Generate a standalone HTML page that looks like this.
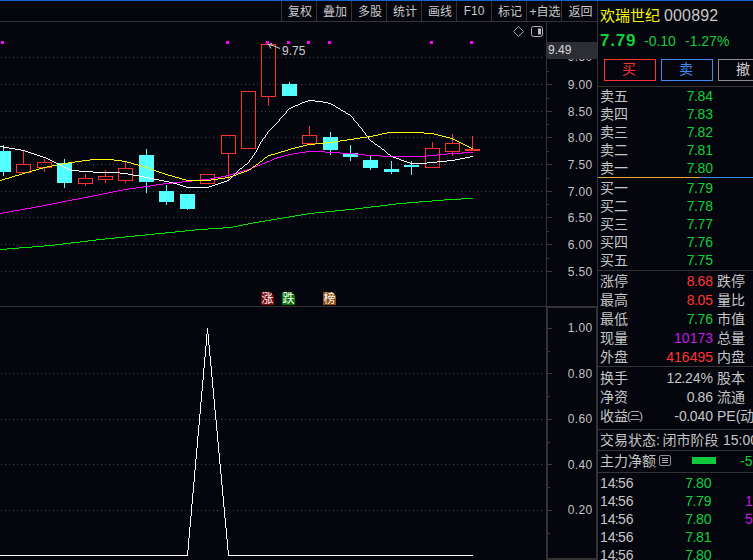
<!DOCTYPE html>
<html lang="zh-CN"><head><meta charset="utf-8"><title>欢瑞世纪 000892</title>
<style>
html,body{margin:0;padding:0;background:#04050d;}
body{width:753px;height:560px;overflow:hidden;position:relative;font-family:"Liberation Sans","Noto Sans CJK SC",sans-serif;color:#c6c6c6;}
#app{position:absolute;left:0;top:0;width:753px;height:560px;overflow:hidden;background:#04050d;}
.abs{position:absolute;white-space:nowrap;}
.ln{position:absolute;background:#333334;}
.tb{position:absolute;top:1px;height:20px;line-height:20px;font-size:12px;text-align:center;color:#cacaca;white-space:nowrap;}
.ax{position:absolute;left:548px;width:44.6px;letter-spacing:.35px;text-align:right;font-size:12px;line-height:12px;height:12px;color:#c4c4c4;white-space:nowrap;}
.r{position:absolute;left:598px;width:155px;height:18px;font-size:14px;line-height:18px;white-space:nowrap;}
.r .l{position:absolute;left:2px;top:0;}
.r .v{position:absolute;right:41px;top:0;text-align:right;}
.r .l2{position:absolute;left:119px;top:0;}
.d{font-style:normal;margin:0 -.5px;}
.g{color:#10d038;} .rd{color:#ff3535;} .p{color:#c21be6;}
.btn{position:absolute;top:59px;width:50px;height:20px;border:1px solid;line-height:20px;text-align:center;font-size:14px;}
.bdg{position:absolute;top:292px;width:13px;height:13px;font-size:12px;line-height:15px;text-align:center;color:#fff;overflow:hidden;}
.bdg i{position:absolute;right:-2.5px;top:-2.5px;width:5px;height:5px;background:#04050d;transform:rotate(45deg);}
</style></head><body><div id="app">

<div class="abs" style="left:0;top:0;width:753px;height:1px;background:#1464d2"></div>
<div class="ln" style="left:0;top:21px;width:597px;height:1px"></div>
<div class="ln" style="left:281px;top:1px;width:1px;height:20px"></div>
<div class="tb" style="left:283px;top:2px;width:34px">复权</div>
<div class="ln" style="left:316px;top:1px;width:1px;height:20px"></div>
<div class="tb" style="left:318px;top:2px;width:34px">叠加</div>
<div class="ln" style="left:351px;top:1px;width:1px;height:20px"></div>
<div class="tb" style="left:353px;top:2px;width:34px">多股</div>
<div class="ln" style="left:386px;top:1px;width:1px;height:20px"></div>
<div class="tb" style="left:388px;top:2px;width:34px">统计</div>
<div class="ln" style="left:421px;top:1px;width:1px;height:20px"></div>
<div class="tb" style="left:423px;top:2px;width:34px">画线</div>
<div class="ln" style="left:456px;top:1px;width:1px;height:20px"></div>
<div class="tb" style="left:457px;width:34px">F10</div>
<div class="ln" style="left:491px;top:1px;width:1px;height:20px"></div>
<div class="tb" style="left:493px;top:2px;width:34px">标记</div>
<div class="ln" style="left:526px;top:1px;width:1px;height:20px"></div>
<div class="tb" style="left:528px;top:2px;width:34px">+自选</div>
<div class="ln" style="left:561px;top:1px;width:1px;height:20px"></div>
<div class="tb" style="left:563px;top:2px;width:35px">返回</div>
<div class="ln" style="left:597px;top:1px;width:1px;height:559px"></div>
<div class="ln" style="left:546px;top:22px;width:1px;height:285px"></div>
<div class="ln" style="left:0;top:306px;width:597px;height:1px"></div>
<div class="ln" style="left:546px;top:306px;width:2px;height:254px"></div>
<div class="ln" style="left:546px;top:306px;width:52px;height:2px"></div>
<div class="ln" style="left:596px;top:306px;width:2px;height:254px"></div>
<div class="ln" style="left:546px;top:558px;width:52px;height:2px"></div>
<svg class="abs" style="left:0;top:0" width="598" height="560" viewBox="0 0 598 560" shape-rendering="crispEdges">
<line x1="1" x2="543" y1="57.5" y2="57.5" stroke="#404046" stroke-width="1" stroke-dasharray="1 3"/>
<line x1="1" x2="543" y1="84.5" y2="84.5" stroke="#404046" stroke-width="1" stroke-dasharray="1 3"/>
<line x1="1" x2="543" y1="111.5" y2="111.5" stroke="#404046" stroke-width="1" stroke-dasharray="1 3"/>
<line x1="1" x2="543" y1="137.5" y2="137.5" stroke="#404046" stroke-width="1" stroke-dasharray="1 3"/>
<line x1="1" x2="543" y1="164.5" y2="164.5" stroke="#404046" stroke-width="1" stroke-dasharray="1 3"/>
<line x1="1" x2="543" y1="191.5" y2="191.5" stroke="#404046" stroke-width="1" stroke-dasharray="1 3"/>
<line x1="1" x2="543" y1="217.5" y2="217.5" stroke="#404046" stroke-width="1" stroke-dasharray="1 3"/>
<line x1="1" x2="543" y1="244.5" y2="244.5" stroke="#404046" stroke-width="1" stroke-dasharray="1 3"/>
<line x1="1" x2="543" y1="271.5" y2="271.5" stroke="#404046" stroke-width="1" stroke-dasharray="1 3"/>
<line x1="1" x2="543" y1="373.5" y2="373.5" stroke="#404046" stroke-width="1" stroke-dasharray="1 3"/>
<line x1="1" x2="543" y1="419.5" y2="419.5" stroke="#404046" stroke-width="1" stroke-dasharray="1 3"/>
<line x1="1" x2="543" y1="464.5" y2="464.5" stroke="#404046" stroke-width="1" stroke-dasharray="1 3"/>
<line x1="1" x2="543" y1="510.5" y2="510.5" stroke="#404046" stroke-width="1" stroke-dasharray="1 3"/>
<rect x="547" y="57" width="5" height="1" fill="#3a3a3c"/>
<rect x="547" y="71" width="2" height="1" fill="#3a3a3c"/>
<rect x="547" y="84" width="5" height="1" fill="#3a3a3c"/>
<rect x="547" y="98" width="2" height="1" fill="#3a3a3c"/>
<rect x="547" y="111" width="5" height="1" fill="#3a3a3c"/>
<rect x="547" y="124" width="2" height="1" fill="#3a3a3c"/>
<rect x="547" y="137" width="5" height="1" fill="#3a3a3c"/>
<rect x="547" y="151" width="2" height="1" fill="#3a3a3c"/>
<rect x="547" y="164" width="5" height="1" fill="#3a3a3c"/>
<rect x="547" y="178" width="2" height="1" fill="#3a3a3c"/>
<rect x="547" y="191" width="5" height="1" fill="#3a3a3c"/>
<rect x="547" y="204" width="2" height="1" fill="#3a3a3c"/>
<rect x="547" y="217" width="5" height="1" fill="#3a3a3c"/>
<rect x="547" y="231" width="2" height="1" fill="#3a3a3c"/>
<rect x="547" y="244" width="5" height="1" fill="#3a3a3c"/>
<rect x="547" y="258" width="2" height="1" fill="#3a3a3c"/>
<rect x="547" y="271" width="5" height="1" fill="#3a3a3c"/>
<rect x="548" y="328" width="4" height="1" fill="#3a3a3c"/>
<rect x="548" y="351" width="2" height="1" fill="#3a3a3c"/>
<rect x="548" y="373" width="4" height="1" fill="#3a3a3c"/>
<rect x="548" y="396" width="2" height="1" fill="#3a3a3c"/>
<rect x="548" y="419" width="4" height="1" fill="#3a3a3c"/>
<rect x="548" y="442" width="2" height="1" fill="#3a3a3c"/>
<rect x="548" y="464" width="4" height="1" fill="#3a3a3c"/>
<rect x="548" y="487" width="2" height="1" fill="#3a3a3c"/>
<rect x="548" y="510" width="4" height="1" fill="#3a3a3c"/>
<rect x="548" y="533" width="2" height="1" fill="#3a3a3c"/>
<rect x="1" y="41" width="3" height="3" fill="#ff00ff"/>
<rect x="226" y="41" width="3" height="3" fill="#ff00ff"/>
<rect x="266" y="41" width="3" height="3" fill="#ff00ff"/>
<rect x="287" y="41" width="3" height="3" fill="#ff00ff"/>
<rect x="307" y="41" width="3" height="3" fill="#ff00ff"/>
<rect x="328" y="41" width="3" height="3" fill="#ff00ff"/>
<rect x="430" y="41" width="3" height="3" fill="#ff00ff"/>
<rect x="470" y="41" width="3" height="3" fill="#ff00ff"/>
<rect x="3" y="145" width="1" height="31" fill="#54ffff"/>
<rect x="-4" y="151" width="15" height="21" fill="#54ffff"/>
<rect x="23" y="151" width="1" height="13" fill="#ff3232"/>
<rect x="16.5" y="164.5" width="14" height="8" fill="none" stroke="#ff3232" stroke-width="1"/>
<rect x="44" y="159" width="1" height="3" fill="#ff3232"/>
<rect x="44" y="168" width="1" height="4" fill="#ff3232"/>
<rect x="37.5" y="162.5" width="14" height="5" fill="none" stroke="#ff3232" stroke-width="1"/>
<rect x="64" y="159" width="1" height="29" fill="#54ffff"/>
<rect x="57" y="163" width="15" height="20" fill="#54ffff"/>
<rect x="85" y="174" width="1" height="4" fill="#ff3232"/>
<rect x="85" y="184" width="1" height="2" fill="#ff3232"/>
<rect x="78.5" y="178.5" width="14" height="5" fill="none" stroke="#ff3232" stroke-width="1"/>
<rect x="105" y="170" width="1" height="6" fill="#ff3232"/>
<rect x="105" y="180" width="1" height="3" fill="#ff3232"/>
<rect x="98.5" y="176.5" width="14" height="3" fill="none" stroke="#ff3232" stroke-width="1"/>
<rect x="125" y="162" width="1" height="6" fill="#ff3232"/>
<rect x="125" y="181" width="1" height="2" fill="#ff3232"/>
<rect x="118.5" y="168.5" width="14" height="12" fill="none" stroke="#ff3232" stroke-width="1"/>
<rect x="146" y="149" width="1" height="44" fill="#54ffff"/>
<rect x="139" y="155" width="15" height="27" fill="#54ffff"/>
<rect x="166" y="185" width="1" height="20" fill="#54ffff"/>
<rect x="159" y="191" width="15" height="11" fill="#54ffff"/>
<rect x="187" y="194" width="1" height="16" fill="#54ffff"/>
<rect x="180" y="194" width="15" height="15" fill="#54ffff"/>
<rect x="200.5" y="174.5" width="14" height="9" fill="none" stroke="#ff3232" stroke-width="1"/>
<rect x="228" y="154" width="1" height="26" fill="#ff3232"/>
<rect x="221.5" y="135.5" width="14" height="18" fill="none" stroke="#ff3232" stroke-width="1"/>
<rect x="241.5" y="91.5" width="14" height="57" fill="none" stroke="#ff3232" stroke-width="1"/>
<rect x="268" y="97" width="1" height="9" fill="#ff3232"/>
<rect x="261.5" y="44.5" width="14" height="52" fill="none" stroke="#ff3232" stroke-width="1"/>
<rect x="289" y="82" width="1" height="14" fill="#54ffff"/>
<rect x="282" y="84" width="15" height="12" fill="#54ffff"/>
<rect x="309" y="126" width="1" height="9" fill="#ff3232"/>
<rect x="302.5" y="135.5" width="14" height="8" fill="none" stroke="#ff3232" stroke-width="1"/>
<rect x="330" y="132" width="1" height="23" fill="#54ffff"/>
<rect x="323" y="137" width="15" height="13" fill="#54ffff"/>
<rect x="350" y="145" width="1" height="16" fill="#54ffff"/>
<rect x="343" y="153" width="15" height="4" fill="#54ffff"/>
<rect x="370" y="156" width="1" height="14" fill="#54ffff"/>
<rect x="363" y="160" width="15" height="8" fill="#54ffff"/>
<rect x="391" y="161" width="1" height="13" fill="#54ffff"/>
<rect x="384" y="169" width="15" height="3" fill="#54ffff"/>
<rect x="411" y="161" width="1" height="14" fill="#54ffff"/>
<rect x="404" y="165" width="15" height="2" fill="#54ffff"/>
<rect x="432" y="142" width="1" height="6" fill="#ff3232"/>
<rect x="425.5" y="148.5" width="14" height="19" fill="none" stroke="#ff3232" stroke-width="1"/>
<rect x="452" y="134" width="1" height="9" fill="#ff3232"/>
<rect x="452" y="152" width="1" height="4" fill="#ff3232"/>
<rect x="445.5" y="143.5" width="14" height="8" fill="none" stroke="#ff3232" stroke-width="1"/>
<rect x="472" y="136" width="1" height="15" fill="#ff3232"/>
<rect x="465" y="149" width="15" height="2" fill="#ff3232"/>
<clipPath id="cl"><rect x="0" y="22" width="473" height="538"/></clipPath><g clip-path="url(#cl)">
<path fill="none" stroke="#00e600" stroke-width="1" d="M0 249.5h7M7 248.5h12M19 247.5h13M32 246.5h12M44 245.5h11M55 244.5h8M63 243.5h8M71 242.5h9M80 241.5h8M88 240.5h8M96 239.5h9M105 238.5h10M115 237.5h10M125 236.5h10M135 235.5h10M145 234.5h10M155 233.5h10M165 232.5h10M175 231.5h10M185 230.5h10M195 229.5h13M208 228.5h15M223 227.5h10M233 226.5h5M238 225.5h5M243 224.5h5M248 223.5h5M253 222.5h6M259 221.5h6M265 220.5h6M271 219.5h6M277 218.5h6M283 217.5h6M289 216.5h6M295 215.5h6M301 214.5h6M307 213.5h8M315 212.5h10M325 211.5h10M335 210.5h10M345 209.5h10M355 208.5h8M363 207.5h8M371 206.5h9M380 205.5h8M388 204.5h8M396 203.5h11M407 202.5h12M419 201.5h13M432 200.5h12M444 199.5h17M461 198.5h12"/>
<path fill="none" stroke="#ff00ff" stroke-width="1" d="M0 213.5h3M3 212.5h6M9 211.5h5M14 210.5h6M20 209.5h5M25 208.5h6M31 207.5h5M36 206.5h6M42 205.5h5M47 204.5h5M52 203.5h5M57 202.5h5M62 201.5h5M67 200.5h5M72 199.5h6M78 198.5h5M83 197.5h5M88 196.5h5M93 195.5h5M98 194.5h5M103 193.5h5M108 192.5h5M113 191.5h5M118 190.5h5M123 189.5h6M129 188.5h7M136 187.5h7M143 186.5h7M150 185.5h6M156 184.5h7M163 183.5h9M172 182.5h10M182 181.5h10M192 180.5h10M202 179.5h8M210 178.5h5M215 177.5h6M221 176.5h5M226 175.5h4M230 174.5h3M233 173.5h4M237 172.5h3M240 171.5h3M243 170.5h4M247 169.5h3M250 168.5h2M252 167.5h3M255 166.5h2M257 165.5h3M260 164.5h2M262 163.5h3M265 162.5h2M267 161.5h3M270 160.5h2M272 159.5h2M274 158.5h3M277 157.5h4M281 156.5h3M284 155.5h4M288 154.5h5M293 153.5h6M299 152.5h7M306 151.5h19M325 152.5h15M340 153.5h15M355 154.5h10M365 155.5h16M381 156.5h46M427 155.5h10M437 154.5h10M447 153.5h15M462 152.5h11"/>
<path fill="none" stroke="#ffff00" stroke-width="1" d="M0 180.5h2M2 179.5h3M5 178.5h4M9 177.5h3M12 176.5h3M15 175.5h4M19 174.5h3M22 173.5h3M25 172.5h4M29 171.5h3M32 170.5h4M36 169.5h3M39 168.5h4M43 167.5h4M47 166.5h5M52 165.5h5M57 164.5h5M62 163.5h6M68 162.5h7M75 161.5h7M82 160.5h8M90 159.5h24M114 160.5h8M122 161.5h5M127 162.5h4M131 163.5h3M134 164.5h4M138 165.5h3M141 166.5h4M145 167.5h3M148 168.5h3M151 169.5h3M154 170.5h2M156 171.5h3M159 172.5h3M162 173.5h3M165 174.5h3M168 175.5h4M172 176.5h3M175 177.5h4M179 178.5h3M182 179.5h4M186 180.5h25M211 179.5h7M218 178.5h7M225 177.5h5M230 176.5h3M233 175.5h3M236 174.5h2M238 173.5h3M241 172.5h3M244 171.5h3M247 170.5h2M249 169.5h2M251 168.5h1M252 167.5h1M253 166.5h2M255 165.5h1M256 164.5h2M258 163.5h1M259 162.5h1M260 161.5h2M262 160.5h1M263 159.5h1M264 158.5h1M265 157.5h2M267 156.5h1M268 155.5h3M271 154.5h4M275 153.5h3M278 152.5h3M281 151.5h4M285 150.5h3M288 149.5h3M291 148.5h4M295 147.5h4M299 146.5h4M303 145.5h4M307 144.5h8M315 143.5h10M325 142.5h9M334 141.5h6M340 140.5h7M347 139.5h7M354 138.5h6M360 137.5h7M367 136.5h6M373 135.5h5M378 134.5h4M382 133.5h5M387 132.5h37M424 133.5h10M434 134.5h4M438 135.5h4M442 136.5h4M446 137.5h4M450 138.5h3M453 139.5h2M455 140.5h2M457 141.5h2M459 142.5h2M461 143.5h2M463 144.5h2M465 145.5h2M467 146.5h2M469 147.5h2M471 148.5h2"/>
<path fill="none" stroke="#ffffff" stroke-width="1" d="M0 146.5h3M3 147.5h6M9 148.5h6M15 149.5h6M21 150.5h4M25 151.5h3M28 152.5h3M31 153.5h3M34 154.5h3M37 155.5h3M40 156.5h3M43 157.5h3M46 158.5h2M48 159.5h2M50 160.5h2M52 161.5h2M54 162.5h2M56 163.5h2M58 164.5h2M60 165.5h2M62 166.5h2M64 167.5h2M66 168.5h2M68 169.5h3M71 170.5h8M79 171.5h14M93 172.5h27M120 173.5h8M128 174.5h5M133 175.5h6M139 176.5h5M144 177.5h5M149 178.5h5M154 179.5h5M159 180.5h5M164 181.5h5M169 182.5h4M173 183.5h4M177 184.5h3M180 185.5h3M183 186.5h3M186 187.5h23M209 186.5h3M212 185.5h3M215 184.5h3M218 183.5h3M221 182.5h3M224 181.5h3M227 180.5h2M229 179.5h1M230 178.5h1M231 177.5h1M232 176.5h1M233 175.5h1M234 174.5h1M235 173.5h1M236 172.5h1M237 171.5h1M238 170.5h1M239 169.5h1M240 168.5h2M242 167.5h1M243 166.5h1M244 165.5h1M245 164.5h2M247 163.5h1M248 162.5h1M249.5 160v2M250 159.5h1M251 158.5h1M252.5 156v2M253 155.5h1M254.5 153v2M255 152.5h1M256.5 150v2M257.5 148v2M258.5 146v2M259.5 144v2M260.5 142v2M261 141.5h1M262.5 139v2M263 138.5h1M264 137.5h1M265.5 135v2M266 134.5h1M267.5 132v2M268 131.5h1M269 130.5h1M270 129.5h1M271 128.5h1M272 127.5h1M273 126.5h1M274 125.5h1M275 124.5h1M276 123.5h1M277 122.5h1M278 121.5h1M279.5 119v2M280 118.5h1M281 117.5h1M282 116.5h1M283 115.5h1M284 114.5h1M285 113.5h1M286.5 111v2M287 110.5h1M288 109.5h1M289 108.5h2M291 107.5h2M293 106.5h2M295 105.5h3M298 104.5h2M300 103.5h2M302 102.5h3M305 101.5h3M308 100.5h7M315 101.5h8M323 102.5h5M328 103.5h3M331 104.5h2M333 105.5h2M335 106.5h1M336 107.5h2M338 108.5h2M340 109.5h1M341 110.5h2M343 111.5h2M345 112.5h1M346 113.5h2M348 114.5h2M350 115.5h1M351 116.5h1M352 117.5h1M353.5 118v2M354 120.5h1M355 121.5h1M356 122.5h1M357 123.5h1M358.5 124v2M359 126.5h1M360 127.5h1M361 128.5h1M362.5 129v2M363 131.5h1M364 132.5h1M365.5 133v2M366 135.5h1M367 136.5h1M368.5 137v2M369 139.5h1M370 140.5h1M371 141.5h2M373 142.5h1M374 143.5h1M375 144.5h2M377 145.5h1M378 146.5h2M380 147.5h1M381 148.5h1M382 149.5h2M384 150.5h1M385 151.5h1M386 152.5h1M387 153.5h1M388 154.5h2M390 155.5h1M391 156.5h2M393 157.5h3M396 158.5h3M399 159.5h2M401 160.5h3M404 161.5h3M407 162.5h3M410 163.5h17M427 162.5h10M437 161.5h10M447 160.5h8M455 159.5h5M460 158.5h5M465 157.5h5M470 156.5h3"/>
<path fill="none" stroke="#ffffff" stroke-width="1" d="M0 555.5h188M187.5 550v5M188.5 538v12M189.5 527v11M190.5 516v11M191.5 504v12M192.5 493v11M193.5 482v11M194.5 470v12M195.5 459v11M196.5 448v11M197.5 436v12M198.5 425v11M199.5 414v11M200.5 402v12M201.5 391v11M202.5 380v11M203.5 368v12M204.5 357v11M205.5 346v11M206.5 334v12M207.5 328v6M207.5 329v5M208.5 334v11M209.5 345v11M210.5 356v10M211.5 366v11M212.5 377v11M213.5 388v11M214.5 399v11M215.5 410v10M216.5 420v11M217.5 431v11M218.5 442v11M219.5 453v11M220.5 464v10M221.5 474v11M222.5 485v11M223.5 496v11M224.5 507v11M225.5 518v10M226.5 528v11M227.5 539v11M228.5 550v6M229 555.5h244"/>
</g>
<g shape-rendering="auto" stroke="#d0d0d0" stroke-width="1" fill="none"><path d="M268.5 44.5 Q274 45.5 280 48.5"/><path d="M272 43.5 L268.5 44.5 L271 48.5"/></g>
<g shape-rendering="auto" stroke="#b4b4b4" stroke-width="1" fill="none"><path stroke="#a4a4a4" d="M518.5 26.5 L523.5 31.5 L518.5 36.5 L513.5 31.5 Z"/><rect x="531.5" y="26.5" width="11" height="10" rx="2"/><rect x="538" y="28.5" width="3" height="6" fill="#c0c0c0" stroke="none"/></g>
</svg>
<div class="abs" style="left:282px;top:45px;font-size:12px;line-height:12px;color:#d0d0d0">9.75</div>
<div class="abs" style="left:547px;top:42px;width:50px;height:17px;background:#2c2e34"></div>
<div class="abs" style="left:548px;top:44px;font-size:12px;line-height:12px;color:#d8d8d8">9.49</div>
<div class="ax" style="top:79px">9.00</div>
<div class="ax" style="top:106px">8.50</div>
<div class="ax" style="top:132px">8.00</div>
<div class="ax" style="top:159px">7.50</div>
<div class="ax" style="top:186px">7.00</div>
<div class="ax" style="top:212px">6.50</div>
<div class="ax" style="top:239px">6.00</div>
<div class="ax" style="top:266px">5.50</div>
<div class="abs" style="left:548px;top:59px;width:45px;height:4px;overflow:hidden"><div class="ax" style="left:0;top:-8px">9.50</div></div>
<div class="ax" style="top:322px">1.00</div>
<div class="ax" style="top:368px">0.80</div>
<div class="ax" style="top:413px">0.60</div>
<div class="ax" style="top:459px">0.40</div>
<div class="ax" style="top:504px">0.20</div>
<div class="bdg" style="left:261px;background:#7c0508">涨<i></i></div>
<div class="bdg" style="left:282px;background:#047406">跌<i></i></div>
<div class="bdg" style="left:323px;background:#8c4a0e">榜<i></i></div>
<div class="abs" style="left:600px;top:6px;font-size:15px;line-height:20px;color:#f5f500">欢瑞世纪</div>
<div class="abs" style="left:664px;top:6px;font-size:16px;letter-spacing:.15px;line-height:20px;color:#c8c8c8">000892</div>
<div class="abs g" style="left:600px;top:30px;font-size:17px;letter-spacing:.8px;line-height:22px;font-weight:bold">7.79</div>
<div class="abs g" style="left:644px;top:31px;font-size:14px;line-height:20px">-0.10</div>
<div class="abs g" style="left:685px;top:31px;font-size:14px;line-height:20px">-1.27%</div>
<div class="btn" style="left:604px;border-color:#ff3232;color:#ff3232"><span style="position:relative;left:-1px;top:-1px">买</span></div>
<div class="btn" style="left:661px;border-color:#3c8cf0;color:#3c8cf0"><span style="position:relative;left:-1px;top:-1px">卖</span></div>
<div class="btn" style="left:718px;border-color:#8c8c8c;color:#d0d0d0"><span style="position:relative;left:-1px;top:-1px">撤</span></div>
<div class="ln" style="left:598px;top:86px;width:155px;height:1px"></div>
<div class="r" style="top:87px"><span class="l">卖五</span><span class="v g" style="right:40px">7<i class="d">.</i>84</span></div>
<div class="r" style="top:105px"><span class="l">卖四</span><span class="v g" style="right:40px">7<i class="d">.</i>83</span></div>
<div class="r" style="top:123px"><span class="l">卖三</span><span class="v g" style="right:40px">7<i class="d">.</i>82</span></div>
<div class="r" style="top:141px"><span class="l">卖二</span><span class="v g" style="right:40px">7<i class="d">.</i>81</span></div>
<div class="r" style="top:159px"><span class="l">卖一</span><span class="v g" style="right:40px">7<i class="d">.</i>80</span></div>
<div class="abs" style="left:598px;top:177px;width:102px;height:1px;background:#e8a83a"></div>
<div class="abs" style="left:700px;top:177px;width:53px;height:1px;background:#3a8ae8"></div>
<div class="r" style="top:179px"><span class="l">买一</span><span class="v g" style="right:40px">7<i class="d">.</i>79</span></div>
<div class="r" style="top:197px"><span class="l">买二</span><span class="v g" style="right:40px">7<i class="d">.</i>78</span></div>
<div class="r" style="top:215px"><span class="l">买三</span><span class="v g" style="right:40px">7<i class="d">.</i>77</span></div>
<div class="r" style="top:233px"><span class="l">买四</span><span class="v g" style="right:40px">7<i class="d">.</i>76</span></div>
<div class="r" style="top:251px"><span class="l">买五</span><span class="v g" style="right:40px">7<i class="d">.</i>75</span></div>
<div class="ln" style="left:598px;top:270px;width:155px;height:1px"></div>
<div class="r" style="top:272px"><span class="l">涨停</span><span class="v rd" style="right:40px">8<i class="d">.</i>68</span><span class="l2">跌停</span></div>
<div class="r" style="top:291px"><span class="l">最高</span><span class="v rd" style="right:40px">8<i class="d">.</i>05</span><span class="l2">量比</span></div>
<div class="r" style="top:310px"><span class="l">最低</span><span class="v g" style="right:40px">7<i class="d">.</i>76</span><span class="l2">市值</span></div>
<div class="r" style="top:329px"><span class="l">现量</span><span class="v p" style="right:40px">10173</span><span class="l2">总量</span></div>
<div class="r" style="top:348px"><span class="l">外盘</span><span class="v rd" style="right:40px">416495</span><span class="l2">内盘</span></div>
<div class="ln" style="left:598px;top:366px;width:155px;height:1px"></div>
<div class="r" style="top:369px"><span class="l">换手</span><span class="v " style="right:40px">12<i class="d">.</i>24%</span><span class="l2">股本</span></div>
<div class="r" style="top:388px"><span class="l">净资</span><span class="v " style="right:40px">0<i class="d">.</i>86</span><span class="l2">流通</span></div>
<div class="r" style="top:407px"><span class="l">收益<span style="font-size:11px;letter-spacing:-1.2px;position:relative;top:-1px;margin-left:-1px">(三)</span></span><span class="v " style="right:40px">-0<i class="d">.</i>040</span><span class="l2">PE(动</span></div>
<div class="ln" style="left:598px;top:429px;width:155px;height:1px"></div>
<div class="r" style="top:431px"><span class="l">交易状态:</span><span class="l" style="left:64.5px">闭市阶段</span><span class="l" style="left:125px">15:00</span></div>
<div class="ln" style="left:598px;top:450px;width:155px;height:1px"></div>
<div class="r" style="top:452px"><span class="l">主力净额</span><span class="g" style="position:absolute;left:142px;top:0">-5</span></div>
<svg class="abs" style="left:659px;top:455px" width="13" height="12" viewBox="0 0 13 12"><rect x="0.5" y="0.5" width="11" height="10" rx="1.5" fill="none" stroke="#909090"/><path d="M3 3.5h6M3 5.5h6M3 7.5h6" stroke="#b0b0b0" stroke-width="1"/></svg>
<div class="abs" style="left:692px;top:457px;width:24px;height:7px;background:#10c83c"></div>
<div class="ln" style="left:598px;top:472px;width:155px;height:1px"></div>
<div class="r" style="top:474px"><span class="l">14<i class="d" style="margin:0 -.8px">:</i>56</span><span class="v g" style="right:41.5px">7<i class="d">.</i>80</span></div>
<div class="r" style="top:492px"><span class="l">14<i class="d" style="margin:0 -.8px">:</i>56</span><span class="v g" style="right:41.5px">7<i class="d">.</i>79</span><span class="p" style="position:absolute;left:147px;top:0">1</span></div>
<div class="r" style="top:510px"><span class="l">14<i class="d" style="margin:0 -.8px">:</i>56</span><span class="v g" style="right:41.5px">7<i class="d">.</i>80</span><span class="p" style="position:absolute;left:147px;top:0">5</span></div>
<div class="r" style="top:528px"><span class="l">14<i class="d" style="margin:0 -.8px">:</i>56</span><span class="v g" style="right:41.5px">7<i class="d">.</i>81</span></div>
<div class="r" style="top:546px"><span class="l">14<i class="d" style="margin:0 -.8px">:</i>56</span><span class="v g" style="right:41.5px">7<i class="d">.</i>80</span></div>
</div></body></html>
